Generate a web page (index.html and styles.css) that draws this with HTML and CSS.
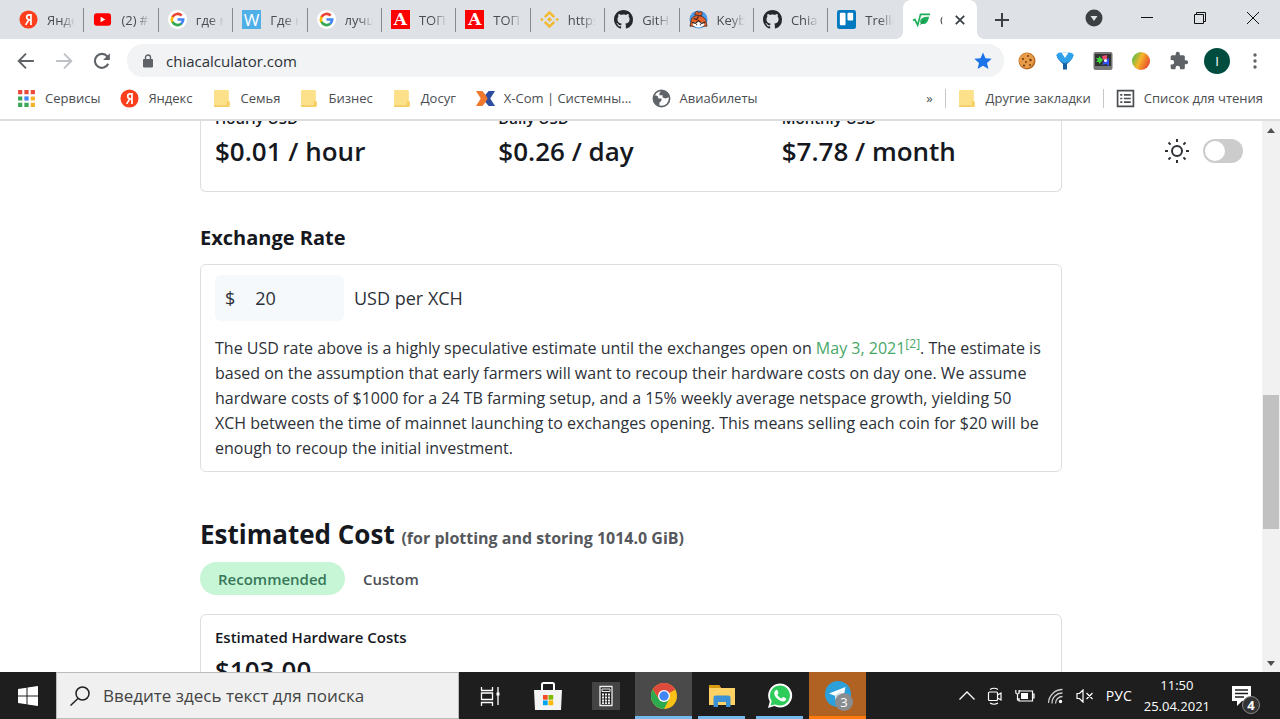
FILE: index.html
```html
<!doctype html>
<html lang="ru">
    <head>
        <meta charset="utf-8">
        <meta name="viewport" content="width=device-width, initial-scale=1">
        <title>Chia Calculator</title>
        <link rel="stylesheet" href="styles.css">
    </head>
    <body>
        <svg class="defs" aria-hidden="true">
            <symbol id="yandex" viewBox="0 0 20 20">
                <circle cx="10" cy="10" r="9.5" fill="#fc3f1d"/>
                <path d="M12.6 4.3v11.4M12.6 5.1h-1.8c-3.6 0-3.6 5.2 0 5.2h1.8M10.4 10.3L7 15.7" fill="none" stroke="#fff" stroke-width="1.8"/>
            </symbol>
            <symbol id="google" viewBox="0 0 20 20">
                <circle cx="10" cy="10" r="10" fill="#fff"/>
                <g fill="none" stroke-width="2.8">
                    <path d="M14.4 6A6 6 0 0 0 4.7 7.4" stroke="#ea4335"/>
                    <path d="M4.8 7.2a6 6 0 0 0 0 5.6" stroke="#fbbc05"/>
                    <path d="M4.7 12.6a6 6 0 0 0 9.2 1.8" stroke="#34a853"/>
                    <path d="M10 10h6a6 6 0 0 1-2.2 4.6" stroke="#4285f4"/>
                </g>
            </symbol>
            <symbol id="github" viewBox="0 0 16 16">
                <path fill="#24292e" d="M8 0C3.58 0 0 3.58 0 8c0 3.54 2.29 6.53 5.47 7.59.4.07.55-.17.55-.38 0-.19-.01-.82-.01-1.49-2.01.37-2.53-.49-2.69-.94-.09-.23-.48-.94-.82-1.13-.28-.15-.68-.52-.01-.53.63-.01 1.08.58 1.23.82.72 1.21 1.87.87 2.33.66.07-.52.28-.87.51-1.07-1.78-.2-3.64-.89-3.64-3.95 0-.87.31-1.59.82-2.15-.08-.2-.36-1.02.08-2.12 0 0 .67-.21 2.2.82.64-.18 1.32-.27 2-.27s1.36.09 2 .27c1.53-1.04 2.2-.82 2.2-.82.44 1.1.16 1.92.08 2.12.51.56.82 1.27.82 2.15 0 3.07-1.87 3.75-3.65 3.95.29.25.54.73.54 1.48 0 1.07-.01 1.93-.01 2.2 0 .21.15.46.55.38A8.01 8.01 0 0 0 16 8c0-4.42-3.58-8-8-8z"/>
            </symbol>
            <symbol id="folder" viewBox="0 0 18 18">
                <rect x="1" y="1" width="14" height="16" rx="1" fill="#fce08a"/>
                <path d="M1 16.2h14" stroke="#f0c95c" stroke-width="1.4"/>
                <path d="M13 11l3 1v4.5l-3 .5z" fill="#f6d066"/>
            </symbol>
        </svg>

        <header class="browser">
            <div class="tab-strip">
                <nav class="tabs">
                    <button class="tab"><svg class="icon"><use href="#yandex"/></svg><span class="tab-title">Яндекс</span></button>
                    <button class="tab">
                        <svg class="icon" viewBox="0 0 20 20"><rect x="1" y="3.5" width="18" height="13" rx="3" fill="#f00"/><path d="M8 7l5 3-5 3z" fill="#fff"/></svg>
                        <span class="tab-title">(2) #1</span>
                    </button>
                    <button class="tab"><svg class="icon"><use href="#google"/></svg><span class="tab-title">где майнить</span></button>
                    <button class="tab"><span class="letter letter-w">W</span><span class="tab-title">Где купить</span></button>
                    <button class="tab"><svg class="icon"><use href="#google"/></svg><span class="tab-title">лучшие</span></button>
                    <button class="tab"><span class="letter letter-a">A</span><span class="tab-title">ТОП 10</span></button>
                    <button class="tab"><span class="letter letter-a">A</span><span class="tab-title">ТОП 10</span></button>
                    <button class="tab">
                        <svg class="icon" viewBox="0 0 20 20" fill="none" stroke="#f3ba2f" stroke-width="2.6"><path d="M5 7.6l5-5 5 5M5 12.4l5 5 5-5"/><path d="M10 7.3l2.7 2.7-2.7 2.7L7.3 10zM.2 10L2 8.2 3.8 10 2 11.8zM16.2 10L18 8.2 19.8 10 18 11.8z" fill="#f3ba2f" stroke="none"/></svg>
                        <span class="tab-title">https</span>
                    </button>
                    <button class="tab"><svg class="icon"><use href="#github"/></svg><span class="tab-title">GitHub</span></button>
                    <button class="tab">
                        <svg class="icon" viewBox="0 0 20 20">
                            <circle cx="10" cy="10" r="9.5" fill="#4c9be8"/>
                            <path d="M2 13C2 8 5 6 9 6s9 2 9 7l1 4H1z" fill="#e8622c" stroke="#33221c" stroke-width=".8"/>
                            <path d="M6 5c0-3 3-5 4-2 3-3 5 0 3 3z" fill="#e8622c" stroke="#33221c" stroke-width=".8"/>
                            <path d="M4 14q6-3 12 0v2q-6 5-12 0z" fill="#fff"/>
                            <path d="M3 13l4 1 3-3 3 3 4-1M5 9l3 1 2-3M8 15v1M12 15v1" fill="none" stroke="#33221c" stroke-width="1.2"/>
                        </svg>
                        <span class="tab-title">Keybase</span>
                    </button>
                    <button class="tab"><svg class="icon"><use href="#github"/></svg><span class="tab-title">Chia</span></button>
                    <button class="tab">
                        <svg class="icon" viewBox="0 0 20 20"><rect x="0" y="0" width="20" height="20" rx="2.5" fill="#0079bf"/><rect x="3" y="3" width="6" height="13" rx="1" fill="#fff"/><rect x="11" y="3" width="6" height="8" rx="1" fill="#fff"/></svg>
                        <span class="tab-title">Trello</span>
                    </button>
                    <div class="tab is-active">
                        <svg class="icon" viewBox="0 0 20 20"><path d="M1 11l2-1 3 6L9 4.5h10" fill="none" stroke="#1fae5b" stroke-width="1.8"/><path d="M9 14c-2-5 3-7 9-7-1 5-3 9-8 7.5z" fill="#1fae5b"/><path d="M8.5 15.5l5-5" stroke="#0c7a3b"/></svg>
                        <span class="tab-title">Chia</span>
                        <button class="tab-close" aria-label="Закрыть вкладку"><svg viewBox="0 0 10 10" width="10" height="10" stroke="#3c4043" stroke-width="1.8"><path d="M.8.8l8.4 8.4M9.2.8L.8 9.2"/></svg></button>
                    </div>
                </nav>
                <button class="new-tab" aria-label="Новая вкладка"><svg viewBox="0 0 14 14" width="14" height="14" stroke="#3c4043" stroke-width="2"><path d="M7 0v14M0 7h14"/></svg></button>
                <div class="window-controls">
                    <button aria-label="Поиск вкладок"><svg viewBox="0 0 18 18" width="18" height="18"><circle cx="9" cy="9" r="8.5" fill="#3c4043"/><path d="M5.5 7h7L9 12z" fill="#dee1e6"/></svg></button>
                    <button aria-label="Свернуть"><svg viewBox="0 0 14 14" width="14" height="14" stroke="#111"><path d="M1 6.5h12"/></svg></button>
                    <button aria-label="Развернуть"><svg viewBox="0 0 14 14" width="14" height="14" fill="none" stroke="#111"><path d="M1.5 3.5h9v9h-9zM3.5 3.5v-2h9v9h-2"/></svg></button>
                    <button aria-label="Закрыть"><svg viewBox="0 0 14 14" width="14" height="14" stroke="#111"><path d="M1 1l12 12M13 1L1 13"/></svg></button>
                </div>
            </div>

            <div class="toolbar">
                <button aria-label="Назад"><svg viewBox="0 0 16 16" width="18" height="18" fill="none" stroke="#5f6368" stroke-width="1.7"><path d="M15 8H2M8 1.5L1.5 8 8 14.5"/></svg></button>
                <button aria-label="Вперёд"><svg viewBox="0 0 16 16" width="18" height="18" fill="none" stroke="#bdc1c6" stroke-width="1.7"><path d="M1 8h13M8 1.5L14.5 8 8 14.5"/></svg></button>
                <button aria-label="Обновить"><svg viewBox="0 0 16 16" width="18" height="18"><path d="M13.5 10.5A6.2 6.2 0 1 1 12.7 4" fill="none" stroke="#5f6368" stroke-width="1.9"/><path d="M15 1v6H9z" fill="#5f6368"/></svg></button>
                <div class="omnibox">
                    <svg viewBox="0 0 12 14" width="12" height="14"><rect x="1" y="5" width="10" height="8.5" rx="1" fill="#5f6368"/><path d="M3.5 5.5V3.5a2.5 2.5 0 0 1 5 0v2" fill="none" stroke="#5f6368" stroke-width="1.4"/></svg>
                    <input class="url" type="text" value="chiacalculator.com" aria-label="Адрес">
                    <button aria-label="Закладка"><svg viewBox="0 0 18 18" width="18" height="18"><path d="M9 .5l2.5 5.8 6.2.5-4.7 4.1 1.4 6.2L9 13.8l-5.4 3.3L5 10.9.3 6.8l6.2-.5z" fill="#1a73e8"/></svg></button>
                </div>
                <div class="extensions">
                    <button aria-label="Cookies">
                        <svg viewBox="0 0 18 18" width="18" height="18"><circle cx="9" cy="9" r="8.5" fill="#b96a26"/><circle cx="8.5" cy="8.5" r="7.5" fill="#e89c48"/><g fill="#6b3812"><circle cx="5" cy="7" r="1.1"/><circle cx="10" cy="4" r=".9"/><circle cx="12.5" cy="8" r="1.2"/><circle cx="8" cy="10" r=".9"/><circle cx="6" cy="13.5" r="1.1"/><circle cx="12" cy="13" r=".9"/></g></svg>
                    </button>
                    <button aria-label="Фильтр">
                        <svg viewBox="0 0 18 18" width="18" height="18"><path d="M.5 3Q1 7 7 12v5.5h4V12q6-5 6.5-9z" fill="#1a5f9e"/><path d="M.5 3Q1 .5 5 .5h8q4 0 4.5 2.5-1 6-8.500 8.500Q1.500 9 .5 3z" fill="#2fa0ea"/><path d="M5.500.5h7L9 6z" fill="#fff"/></svg>
                    </button>
                    <button aria-label="Расширение">
                        <svg viewBox="0 0 20 20" width="20" height="20"><rect x=".5" y="1" width="19" height="18" rx="2" fill="#777"/><path d="M2 3h16v12H2z" fill="#333"/><path d="M3 7h3V5l4 4-4 4v-2H3l2-2z" fill="#3bdc3b"/><path d="M9 5l5-1v4l-4 1z" fill="#f04d6e"/><path d="M11 10l5-3v8l-3-2-4 1z" fill="#3350f0"/><circle cx="12.5" cy="9.5" r="1.5" fill="#fff"/></svg>
                    </button>
                    <button class="ext-ball" aria-label="Цвет"></button>
                    <button aria-label="Расширения"><svg viewBox="0 0 24 24" width="20" height="20"><path fill="#5f6368" d="M20.5 11H19V7a2 2 0 0 0-2-2h-4V3.5a2.5 2.5 0 0 0-5 0V5H4a2 2 0 0 0-2 2v3.8h1.5a2.7 2.7 0 0 1 0 5.4H2V20a2 2 0 0 0 2 2h3.8v-1.5a2.7 2.7 0 0 1 5.4 0V22H17a2 2 0 0 0 2-2v-4h1.5a2.5 2.5 0 0 0 0-5z"/></svg></button>
                    <button class="avatar">I</button>
                    <button aria-label="Меню"><svg viewBox="0 0 4 18" width="4" height="18" fill="#5f6368"><circle cx="2" cy="3" r="1.7"/><circle cx="2" cy="9" r="1.7"/><circle cx="2" cy="15" r="1.7"/></svg></button>
                </div>
            </div>

            <nav class="bookmarks">
                <a href="#">
                    <svg class="icon" viewBox="0 0 18 18"><path d="M1 1h4v4H1zM7 1h4v4H7zM13 1h4v4h-4z" fill="#e84b3c"/><path d="M1 7h4v4H1zM1 13h4v4H1zM7 13h4v4H7z" fill="#3aa757"/><path d="M7 7h4v4H7z" fill="#4285f4"/><path d="M13 7h4v4h-4zM13 13h4v4h-4z" fill="#f5b32b"/></svg>
                    Сервисы
                </a>
                <a href="#"><svg class="icon"><use href="#yandex"/></svg>Яндекс</a>
                <a href="#"><svg class="icon"><use href="#folder"/></svg>Семья</a>
                <a href="#"><svg class="icon"><use href="#folder"/></svg>Бизнес</a>
                <a href="#"><svg class="icon"><use href="#folder"/></svg>Досуг</a>
                <a href="#">
                    <svg class="icon" viewBox="0 0 18 18"><path d="M0 2h6l3 3.500 3.500 3.500L9 12.500 6 16H0l4.500-7z" fill="#f0782d"/><path d="M18 2h-6L9 5.500 11 9l-2 3.500 3 3.500h6l-4.500-7z" fill="#2c4da0"/></svg>
                    X-Com | Системны...
                </a>
                <a href="#">
                    <svg class="icon" viewBox="0 0 18 18"><circle cx="9" cy="9" r="7.7" fill="#fff" stroke="#5f6368" stroke-width="1.6"/><path d="M2 6c3 0 4 1 4 3h3v2l-2 2v3C3 15 1 11 2 6zM9 1.5c4 0 7 3 7.5 6L13 9l-3-1V6H7V4z" fill="#5f6368"/></svg>
                    Авиабилеты
                </a>
                <button class="more" aria-label="Ещё">»</button>
                <span class="separator"></span>
                <a href="#"><svg class="icon"><use href="#folder"/></svg>Другие закладки</a>
                <span class="separator"></span>
                <a href="#">
                    <svg class="icon" viewBox="0 0 18 18" fill="none" stroke="#4a4d51" stroke-width="1.6"><path d="M1.5 1.5h15v15h-15zM4 5.5h2M7.5 5.5H14M4 9h2M7.5 9H14M4 12.5h2M7.5 12.5H14"/></svg>
                    Список для чтения
                </a>
            </nav>
        </header>

        <div class="viewport">
            <main class="page" lang="en">
                <div class="container">
                    <section class="card stats">
                        <div>
                            <div class="label">Hourly USD</div>
                            <div class="value">$0.01 / hour</div>
                        </div>
                        <div>
                            <div class="label">Daily USD</div>
                            <div class="value">$0.26 / day</div>
                        </div>
                        <div>
                            <div class="label">Monthly USD</div>
                            <div class="value">$7.78 / month</div>
                        </div>
                    </section>

                    <h3 class="sub-title">Exchange Rate</h3>
                    <section class="card">
                        <div class="rate">
                            <div class="rate-field">
                                <span>$</span>
                                <input id="rate" type="text" value="20">
                            </div>
                            <label for="rate">USD per XCH</label>
                        </div>
                        <p class="note">The USD rate above is a highly speculative estimate until the exchanges open on <a href="#">May 3, 2021<sup>[2]</sup></a>. The estimate is based on the assumption that early farmers will want to recoup their hardware costs on day one. We assume hardware costs of $1000 for a 24 TB farming setup, and a 15% weekly average netspace growth, yielding 50 XCH between the time of mainnet launching to exchanges opening. This means selling each coin for $20 will be enough to recoup the initial investment.</p>
                    </section>

                    <h2 class="title">Estimated Cost <small>(for plotting and storing 1014.0 GiB)</small></h2>
                    <div class="pills">
                        <button class="pill is-selected">Recommended</button>
                        <button class="pill">Custom</button>
                    </div>
                    <section class="card">
                        <div class="label">Estimated Hardware Costs</div>
                        <div class="value">$103.00</div>
                    </section>
                </div>

                <label class="theme">
                    <svg viewBox="0 0 24 24" width="24" height="24" fill="none" stroke="#2d3138" stroke-width="2"><circle cx="12" cy="12" r="5"/><path d="M12 0v3M12 21v3M0 12h3M21 12h3M3.5 3.5l2.1 2.1M18.4 18.4l2.1 2.1M3.5 20.5l2.1-2.1M18.4 5.6l2.1-2.1"/></svg>
                    <input type="checkbox" class="switch" aria-label="Dark theme">
                </label>
            </main>
            <div class="scrollbar" aria-hidden="true">
                <span class="arrow"><svg viewBox="0 0 8 5" width="8" height="5"><path d="M0 5l4-5 4 5z" fill="#505050"/></svg></span>
                <span class="before"></span>
                <span class="thumb"></span>
                <span class="after"></span>
                <span class="arrow"><svg viewBox="0 0 8 5" width="8" height="5"><path d="M0 0l4 5 4-5z" fill="#505050"/></svg></span>
            </div>
        </div>

        <footer class="taskbar">
            <button class="start" aria-label="Пуск"><svg viewBox="0 0 20 20" width="20" height="20" fill="#fff"><path d="M0 3l8.5-1.3v7.8H0zM9.5 1.5L20 0v9.5H9.5zM0 10.5h8.5v7.8L0 17zM9.5 10.5H20V20L9.5 18.5z"/></svg></button>
            <label class="search">
                <svg viewBox="0 0 20 20" width="20" height="20" fill="none" stroke="#222" stroke-width="1.5"><circle cx="12.5" cy="7.5" r="6.5"/><path d="M8 12.5L.5 19.5"/></svg>
                <input type="text" placeholder="Введите здесь текст для поиска">
            </label>
            <div class="apps">
                <button class="app" aria-label="Представление задач"><svg viewBox="0 0 20 20" width="20" height="20" fill="none" stroke="#fff" stroke-width="1.3"><path d="M1.5 1v3.5h11V1M1.5 7h11v6.5h-11zM1.5 20v-3.5h11V20M18 1v18"/><path d="M16.5 8h3" stroke-width="3"/></svg></button>
                <button class="app" aria-label="Microsoft Store"><svg viewBox="0 0 28 28" width="28" height="28"><path d="M8 9V2.5q0-1.5 1.5-1.5h9q1.5 0 1.5 1.5V9" fill="none" stroke="#fff" stroke-width="2"/><path d="M0 8h28l-1 20H1z" fill="#f4f4f4"/><path d="M9 13h4.7v4.7H9z" fill="#f25022"/><path d="M14.5 13h4.7v4.7h-4.7z" fill="#7fba00"/><path d="M9 18.5h4.7v4.7H9z" fill="#00a4ef"/><path d="M14.5 18.5h4.7v4.7h-4.7z" fill="#ffb900"/></svg></button>
                <button class="app" aria-label="Калькулятор"><svg viewBox="0 0 28 28" width="28" height="28"><path d="M0 0h28v28H0z" fill="#444"/><path d="M8 4.5h12v19H8z" fill="#222" stroke="#eee" stroke-width="1.3"/><path d="M10 7h8v2.5h-8z" fill="none" stroke="#eee"/><path d="M10 12.5h8M10 15.5h8M10 18.5h8M10 21.2h8" stroke="#eee" stroke-width="1.8" stroke-dasharray="2 1"/></svg></button>
                <button class="app is-active is-running" aria-label="Chrome">
                    <svg viewBox="0 0 26 26" width="26" height="26"><circle cx="13" cy="13" r="13" fill="#fbc116"/><path d="M13 13L1.74 6.5A13 13 0 0 1 24.26 6.5z" fill="#de4a3b"/><path d="M7.8 16L1.74 6.5 13 7z" fill="#de4a3b"/><path d="M1.74 6.5A13 13 0 0 0 13 26l5.2-10-5.2 3-5.2-3z" fill="#2da94f"/><circle cx="13" cy="13" r="6" fill="#fff"/><circle cx="13" cy="13" r="4.7" fill="#4285f4"/></svg>
                </button>
                <button class="app is-running is-inset" aria-label="Проводник"><svg viewBox="0 0 26 24" width="26" height="24"><path d="M0 1h10l2 3h14v17H0z" fill="#fdd163"/><path d="M0 1h10l2 3H0z" fill="#d99a12"/><path d="M4.5 23V13.5q0-2 2-2h13q2 0 2 2V23H17v-5H9v5z" fill="#3d92d6"/></svg></button>
                <button class="app is-running is-inset" aria-label="WhatsApp"><svg viewBox="0 0 26 26" width="26" height="26"><path d="M1 25l1.8-6.4A12 12 0 1 1 7.3 23z" fill="#fff"/><path d="M3.5 22.5l1.2-4.3A10 10 0 1 1 8.3 21.4z" fill="#2ecc5a"/><path d="M8.5 7.5c1-1.2 1.8-.7 2.2.5l.7 1.7c.2.8-1 1.5-1 2 .8 1.7 2.2 3 4 3.8.7 0 1.3-1.6 2-1.5l2.4 1.2c.8.4.2 2-.6 2.6-1.7 1.2-4.2.7-6.8-1.2-3.6-2.7-5.6-6.400-2.900-9.100z" fill="#fff"/></svg></button>
                <button class="app is-alert" aria-label="Telegram">
                    <svg viewBox="0 0 26 26" width="26" height="26"><circle cx="13" cy="13" r="13" fill="#2ba0da"/><path d="M4 12.5L20.5 6 17.7 20l-5-3.7-2.5 2.4-.2-4z" fill="#fff"/><path d="M10 14.7l7.5-6-5.3 6.5-2 3.5z" fill="#c5dfed"/></svg>
                    <span class="badge">3</span>
                </button>
            </div>
            <div class="tray">
                <svg viewBox="0 0 16 9" width="16" height="9" fill="none" stroke="#fff" stroke-width="1.3"><path d="M.5 8.5L8 1l7.5 7.5"/></svg>
                <svg viewBox="0 0 16 18" width="16" height="18" fill="none" stroke="#fff" stroke-width="1.2"><rect x="1.5" y="5" width="9" height="8.5" rx="1"/><path d="M10.5 8l3.5-2v7l-3.5-2M3 2.5q4-2.5 8 0M3 16q4 2.5 8 0"/></svg>
                <svg viewBox="0 0 20 14" width="20" height="14" fill="none" stroke="#fff" stroke-width="1.2"><path d="M4 4.5V2h13.5v10H4V9M17.5 5H19v4h-1.5M2.5 5v6h2M.8 1v2.5q0 1.5 1.7 1.5t1.7-1.5V1"/><path d="M6 4h7v6H6z" fill="#fff" stroke="none"/></svg>
                <svg viewBox="0 0 17 16" width="17" height="16" fill="none" stroke="#ccc" stroke-width="1.3"><path d="M1.5 15A14 14 0 0 1 15.5 1.5M5 15.5A10 10 0 0 1 15.5 5M8.5 15.5A7 7 0 0 1 15.5 8.5"/><circle cx="13.5" cy="13.5" r="1.7" fill="#fff" stroke="none"/></svg>
                <svg viewBox="0 0 18 14" width="18" height="14" fill="none" stroke="#fff" stroke-width="1.2"><path d="M1 4.5h2.5L7 1v12L3.5 9.5H1zM10.5 4l6 6M16.5 4l-6 6"/></svg>
                <span>РУС</span>
                <time class="clock">11:50<br>25.04.2021</time>
                <button class="notices" aria-label="Уведомления">
                    <svg viewBox="0 0 20 20" width="20" height="20"><path d="M0 0h19v15h-9l-5 5v-5H0z" fill="#fff"/><path d="M3 4h13M3 7.5h13M3 11h9" stroke="#1e1e1e" stroke-width="1.3"/></svg>
                    <span class="badge is-dark">4</span>
                </button>
            </div>
        </footer>
    </body>
</html>
```
FILE: styles.css
```css
* {
    box-sizing: border-box;
}
body {
    margin: 0;
    height: 100vh;
    display: flex;
    flex-direction: column;
    overflow: hidden;
    font-family: "Open Sans", "Noto Sans", sans-serif;
    background-color: #fff;
    color: #2d3138;
}
button {
    display: flex;
    align-items: center;
    justify-content: center;
    padding: 0;
    border: 0;
    background: none;
    font: inherit;
    color: inherit;
}
input {
    min-width: 0;
    padding: 0;
    border: 0;
    outline: 0;
    background: none;
    font: inherit;
    color: inherit;
}
a {
    text-decoration: none;
}
svg {
    flex-shrink: 0;
}
.defs {
    position: absolute;
    width: 0;
    height: 0;
}
.icon {
    width: 19px;
    height: 19px;
}

/* browser */
.browser {
    flex-shrink: 0;
    font-size: 13px;
    color: #4a4d51;
    border-bottom: 2px solid #dcdde0;
}
.tab-strip {
    display: flex;
    height: 39px;
    padding-left: 10px;
    background-color: #dee1e6;
}
.tabs {
    display: flex;
    width: 967px;
}
.tab {
    position: relative;
    flex: 1 1 0;
    min-width: 0;
    display: flex;
    align-items: center;
    justify-content: flex-start;
    gap: 9px;
    padding: 0 9px;
}
.tab:not(.is-active):not(:nth-child(12))::after {
    content: "";
    position: absolute;
    right: 0;
    top: 8px;
    width: 1px;
    height: 24px;
    background-color: #868a90;
}
.tab-title {
    flex: 1;
    overflow: hidden;
    text-align: left;
    white-space: nowrap;
    -webkit-mask-image: linear-gradient(to right, #000 50%, transparent);
    mask-image: linear-gradient(to right, #000 50%, transparent);
}
.tab.is-active {
    background-color: #fff;
    border-radius: 8px 8px 0 0;
}
/* curved feet of the active tab */
.tab.is-active::before,
.tab.is-active::after {
    content: "";
    position: absolute;
    bottom: 0;
    width: 8px;
    height: 8px;
}
.tab.is-active::before {
    right: 100%;
    background: radial-gradient(circle at 0 0, transparent 8px, #fff 8px);
}
.tab.is-active::after {
    left: 100%;
    background: radial-gradient(circle at 100% 0, transparent 8px, #fff 8px);
}
.tab-close {
    width: 16px;
}
.letter {
    width: 19px;
    height: 19px;
    color: #fff;
    text-align: center;
    line-height: 19px;
}
.letter-w {
    background-color: #4fb0e8;
    font-size: 17px;
}
.letter-a {
    background-color: #f00;
    font-family: "DejaVu Serif", serif;
    font-size: 17px;
    font-weight: bold;
}
.new-tab {
    width: 50px;
}
.window-controls {
    flex: 1;
    display: grid;
    grid-template-columns: 1fr 1fr 1fr 1fr;
    padding-left: 40px;
    height: 36px;
}
.toolbar {
    display: flex;
    align-items: center;
    gap: 20px;
    height: 43px;
    padding: 0 12px 0 17px;
}
.omnibox {
    flex: 1;
    display: flex;
    align-items: center;
    gap: 12px;
    height: 33px;
    margin-left: -4px;
    padding: 0 12px 0 15px;
    border-radius: 16px;
    background-color: #f1f3f4;
    color: #2d3138;
    font-size: 15px;
}
.url {
    flex: 1;
}
.extensions {
    display: flex;
    align-items: center;
    gap: 12px;
    margin-left: -10px;
}
.extensions button {
    width: 26px;
    height: 26px;
}
.extensions .ext-ball {
    width: 18px;
    height: 18px;
    margin: 0 4px;
    border-radius: 50%;
    background: linear-gradient(115deg, #45c04a 5%, #f6b52b 45%, #e7352d 95%);
}
.avatar {
    border-radius: 50%;
    background-color: #004d40;
    color: #fff;
}
.bookmarks {
    display: flex;
    align-items: center;
    gap: 20px;
    height: 37px;
    padding: 0 17px 5px;
    white-space: nowrap;
}
.bookmarks a {
    display: flex;
    align-items: center;
    gap: 9px;
    color: inherit;
}
.more {
    margin-left: auto;
}
.separator {
    width: 1px;
    height: 19px;
    margin: 0 -8px;
    background-color: #c4c7cc;
}

/* page */
.viewport {
    flex: 1;
    min-height: 0;
    display: flex;
}
.page {
    position: relative;
    flex: 1;
    overflow: hidden;
}
.container {
    max-width: 862px;
    margin: -15px auto 0;
}
.card {
    padding: 10px 16px 10px 14px;
    border: 1px solid #dcdee0;
    border-radius: 6px;
}
.stats {
    display: grid;
    grid-template-columns: repeat(3, 1fr);
    gap: 20px;
    padding-top: 0;
    padding-bottom: 20px;
    border-top: 0;
    border-radius: 0 0 6px 6px;
}
.label {
    font-size: 15px;
    font-weight: 600;
    line-height: 25px;
    color: #15181e;
}
.value {
    font-size: 26px;
    font-weight: 600;
    line-height: 40px;
    color: #15181e;
}
.sub-title {
    margin: 30px 0 10px;
    font-size: 20px;
    line-height: 32px;
    color: #15181e;
}
.rate {
    display: flex;
    align-items: center;
    gap: 10px;
    font-size: 18px;
}
.rate-field {
    display: flex;
    align-items: center;
    gap: 20px;
    width: 129px;
    height: 46px;
    padding: 0 10px;
    border-radius: 6px;
    background-color: #f5f9fc;
}
.note {
    margin: 15px 0 0;
    font-size: 16px;
    line-height: 25px;
}
.note a {
    color: #48a868;
}
.note sup {
    font-size: 12px;
    line-height: 0;
}
.title {
    margin: 40px 0 2px;
    font-size: 26px;
    line-height: 44px;
    color: #15181e;
}
.title small {
    font-size: 16px;
    color: #55585c;
}
.pills {
    display: flex;
    margin-bottom: 19px;
}
.pill {
    height: 33px;
    padding: 0 18px;
    border-radius: 17px;
    font-size: 15px;
    font-weight: 600;
    color: #4b4f55;
}
.pill.is-selected {
    background-color: #c6f6d5;
    color: #38765a;
}
.theme {
    position: absolute;
    top: 18px;
    right: 19px;
    display: flex;
    align-items: center;
    gap: 14px;
}
.switch {
    appearance: none;
    width: 40px;
    height: 24px;
    margin: 0;
    padding: 2px;
    border-radius: 12px;
    background-color: #ccc;
}
.switch::before {
    content: "";
    display: block;
    width: 20px;
    height: 20px;
    border-radius: 50%;
    background-color: #fff;
}
.scrollbar {
    display: flex;
    flex-direction: column;
    width: 18px;
    background-color: #f1f1f1;
}
.arrow {
    display: flex;
    align-items: center;
    justify-content: center;
    height: 18px;
}
.before {
    flex: 256;
}
.thumb {
    flex: 134;
    margin: 0 1px;
    background-color: #c1c1c1;
}
.after {
    flex: 125;
}

/* taskbar */
.taskbar {
    flex-shrink: 0;
    display: flex;
    height: 47px;
    background-color: #1e1e1e;
    color: #fff;
}
.start {
    width: 56px;
}
.search {
    flex: 0 1 403px;
    display: flex;
    align-items: center;
    gap: 13px;
    padding: 0 13px;
    border: 1px solid #bbb;
    background-color: #f0f0f0;
    color: #444;
    font-size: 17px;
}
.search input {
    flex: 1;
}
.search input::placeholder {
    color: #444;
}
.apps {
    display: flex;
    gap: 1px;
    padding-left: 2px;
}
.app {
    position: relative;
    width: 57px;
}
.app.is-active {
    background-color: #4a4a4a;
}
.app.is-running::after {
    content: "";
    position: absolute;
    left: 0;
    right: 0;
    bottom: 0;
    height: 3px;
    background-color: #76b9ed;
}
.app.is-inset::after {
    left: 5px;
    right: 5px;
}
.app.is-alert {
    background-color: #b06222;
    border-bottom: 3px solid #ff7a0d;
}
.badge {
    position: absolute;
    right: 13px;
    bottom: 5px;
    width: 18px;
    height: 18px;
    border-radius: 50%;
    background-color: #8a8d90;
    color: #fff;
    font-size: 13px;
    line-height: 18px;
    text-align: center;
}
.badge.is-dark {
    right: -8px;
    bottom: 5px;
    border: 1px solid #888;
    background-color: #333;
    font-weight: bold;
    line-height: 16px;
}
.tray {
    flex: 1;
    display: flex;
    align-items: center;
    justify-content: flex-end;
    gap: 12px;
    padding-right: 28px;
    font-size: 14px;
}
.clock {
    font-size: 13px;
    line-height: 21px;
    text-align: center;
}
.notices {
    position: relative;
    height: 47px;
    margin-left: 10px;
}
```
